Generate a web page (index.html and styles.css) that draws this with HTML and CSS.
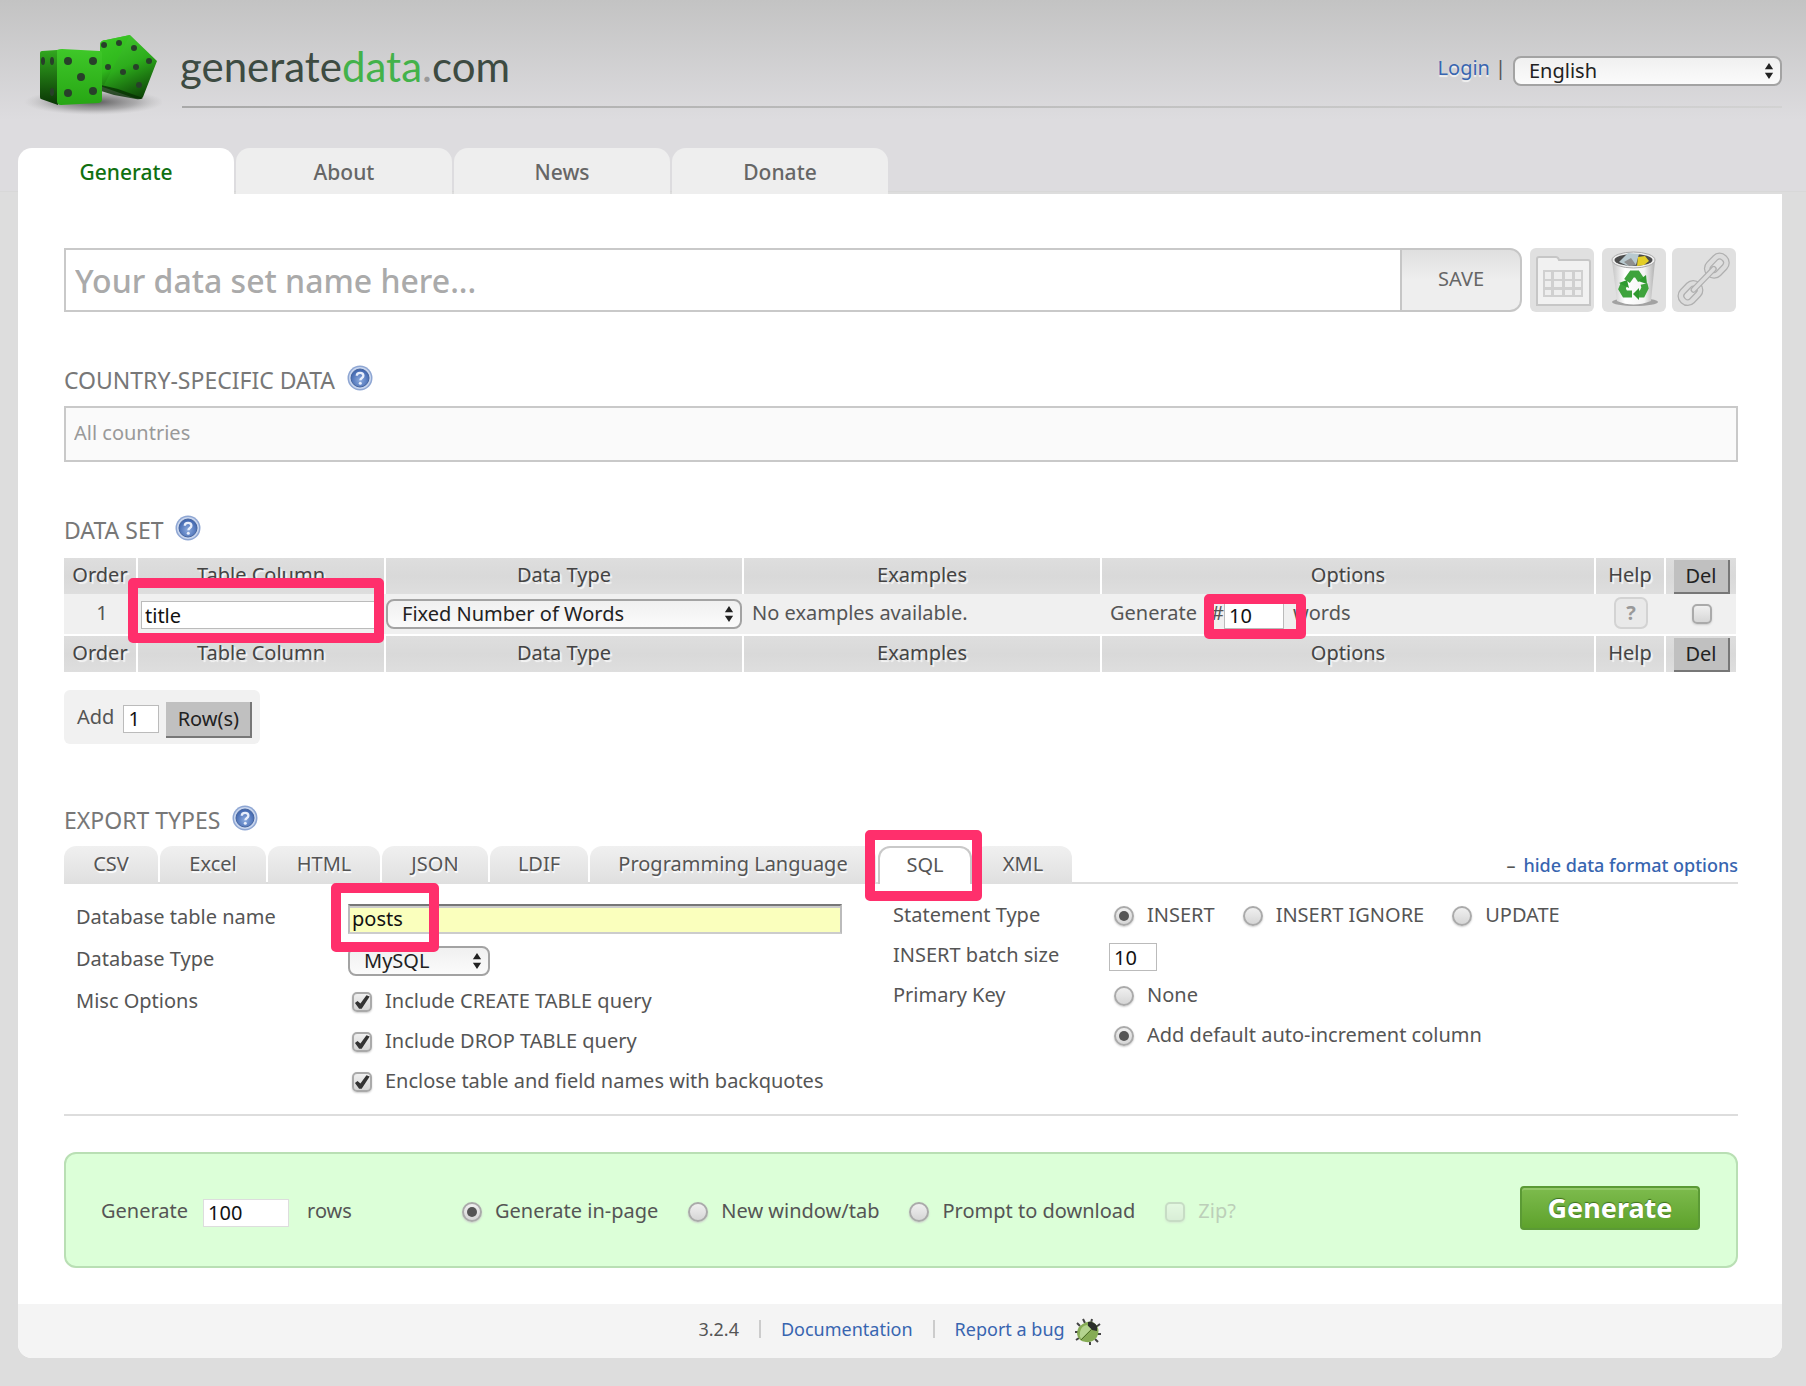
FILE: index.html
```html
<!DOCTYPE html>
<html lang="en">
<head>
<meta charset="utf-8">
<title>generatedata.com</title>
<link rel="stylesheet" href="styles.css">
</head>
<body>
<svg class="sprite" aria-hidden="true">
  <defs>
    <radialGradient id="help-fill" cx="50%" cy="62%" r="60%">
      <stop offset="0" stop-color="#8cabdf"/><stop offset="1" stop-color="#3c62ac"/>
    </radialGradient>
  </defs>
  <symbol id="arrows" viewBox="0 0 10 20"><path d="M5 1l4.600 7H.4zM5 19l4.600-7H.4z" fill="#222"/></symbol>
  <symbol id="help" viewBox="0 0 26 26">
    <circle cx="13" cy="13" r="12.500" fill="#8ea6d3"/>
    <circle cx="13" cy="13" r="11" fill="#c9d6ee"/>
    <circle cx="13" cy="13" r="9" fill="url(#help-fill)" stroke="#46659f" stroke-width="1"/>
    <path d="M9.800 10.800c0-4 6.600-4 6.600 0 0 2.300-3 2.200-3 4.500" fill="none" stroke="#e8eefb" stroke-width="2.300"/>
    <circle cx="13.300" cy="18.200" r="1.500" fill="#e8eefb"/>
  </symbol>
</svg>

<header class="header">
  <svg class="dice" width="140" height="100" viewBox="0 0 140 100" aria-hidden="true">
    <defs>
      <linearGradient id="d1" x1="0" y1="0" x2="0" y2="1"><stop offset="0" stop-color="#3fc829"/><stop offset="1" stop-color="#27a614"/></linearGradient>
      <linearGradient id="d2" x1="0" y1="0" x2="0" y2="1"><stop offset="0" stop-color="#32a91f"/><stop offset="1" stop-color="#0a3505"/></linearGradient>
      <linearGradient id="d3" x1=".2" y1="0" x2=".6" y2="1"><stop offset="0" stop-color="#43c92f"/><stop offset=".5" stop-color="#2dad1c"/><stop offset="1" stop-color="#0f4a08"/></linearGradient>
      <linearGradient id="d4" x1="0" y1="0" x2=".3" y2="1"><stop offset="0" stop-color="#3cc826"/><stop offset=".7" stop-color="#2fb81c"/><stop offset="1" stop-color="#1d7a10"/></linearGradient>
      <radialGradient id="sh"><stop offset="0" stop-color="#222" stop-opacity=".7"/><stop offset=".6" stop-color="#555" stop-opacity=".35"/><stop offset="1" stop-color="#999" stop-opacity="0"/></radialGradient>
    </defs>
    <ellipse cx="72" cy="72" rx="70" ry="13" fill="url(#sh)"/>
    <path d="M78 14q1-4 6-4l24-5 27 26-14 36-2 2-7-1-34-12z" fill="url(#d3)"/>
    <path d="M78 14q1-4 6-4l24-5-26 50-4-1z" fill="url(#d4)"/>
    <path d="M79 55l17 4 25 9q-3 2-7 1l-22-4-13-4z" fill="#082f04" opacity=".8"/>
    <path d="M18 23q0-2 2-2l15-1 1 55-17-6q-1 0-1-2z" fill="url(#d2)"/>
    <path d="M35 20q2-1 5-1l38 2q2 0 2 3v46q0 2-3 3l-38 2q-4 0-4-4z" fill="url(#d1)"/>
    <g fill="#28402a">
      <circle cx="46" cy="31" r="4"/><circle cx="71" cy="31" r="4"/><circle cx="59" cy="47" r="4"/><circle cx="46" cy="63" r="4"/><circle cx="71" cy="61" r="4"/>
      <ellipse cx="21" cy="31" rx="2" ry="4"/><ellipse cx="30" cy="31" rx="2" ry="4"/><ellipse cx="30" cy="62" rx="2" ry="4"/>
      <circle cx="82" cy="15" r="3"/><circle cx="97" cy="13" r="3"/><circle cx="86" cy="37" r="3"/>
      <circle cx="112" cy="18" r="3"/><circle cx="127" cy="31" r="3"/><circle cx="101" cy="42" r="3"/><circle cx="114" cy="37" r="3"/><circle cx="117" cy="55" r="3"/>
    </g>
  </svg>
  <div class="brand-row">
    <div class="brand">generate<span class="brand-data">data</span><span class="brand-dot">.</span>com</div>
    <div class="account">
      <a href="#">Login</a><span class="bar">|</span>
      <span class="select lang"><select aria-label="Language"><option>English</option></select><svg><use href="#arrows"/></svg></span>
    </div>
  </div>
</header>

<nav class="tabs">
  <a class="tab active" href="#">Generate</a>
  <a class="tab" href="#">About</a>
  <a class="tab" href="#">News</a>
  <a class="tab" href="#">Donate</a>
</nav>

<main class="panel">
  <form class="content">
    <div class="name-row">
      <input class="set-name" type="text" aria-label="Data set name" placeholder="Your data set name here...">
      <button class="save" type="button">SAVE</button>
      <div class="tools">
        <button class="tool" type="button" aria-label="Data sets">
          <svg width="64" height="64" viewBox="0 0 64 64"><path d="M7 57V11q0-2 2-2h17q2 0 3 3h29q2 0 2 2v43z" fill="#f1f1f1" stroke="#c6c6c6" stroke-width="2"/><path d="M13 22h40v27H13z" fill="#d0d0d0"/><path d="M15 24h6v7h-6zm9 0h8v7h-8zm11 0h7v7h-7zm10 0h6v7h-6zM15 33h6v6h-6zm9 0h8v6h-8zm11 0h7v6h-7zm10 0h6v6h-6zM15 42h6v5h-6zm9 0h8v5h-8zm11 0h7v5h-7zm10 0h6v5h-6z" fill="#eee"/></svg>
        </button>
        <button class="tool" type="button" aria-label="Empty">
          <svg width="64" height="64" viewBox="0 0 64 64"><defs><linearGradient id="bin"><stop offset="0" stop-color="#c4c4c4"/><stop offset=".3" stop-color="#fff"/><stop offset=".75" stop-color="#f4f4f4"/><stop offset="1" stop-color="#b0b0b0"/></linearGradient></defs><ellipse cx="33" cy="54" rx="23" ry="4" fill="#888" opacity=".7"/><path d="M10 13l5 40q16 7 34 0l4-40z" fill="url(#bin)"/><ellipse cx="31.500" cy="12" rx="21.500" ry="8" fill="#eee" stroke="#aaa"/><ellipse cx="31.500" cy="12" rx="19" ry="6" fill="#4b4b4b"/><path d="M17 14l9-9 11 1-3 11-8 1z" fill="#b8c9cf"/><path d="M22 14l7-4 5 7-7 1z" fill="#8f8f8f"/><path d="M36 9l7-1 4 5-5 4-7 1z" fill="#e3ce27"/><g fill="none" stroke="#3ea33c" stroke-width="7"><path d="M25 33l5-7h5l4 6"/><path d="M42 36l1 4-3 6h-5"/><path d="M30 46h-7l-3-5 2-5"/></g><g fill="#2f9a2f"><path d="M44 27l1 9-9-3z"/><path d="M37 40v12l-6-6z"/><path d="M17 35l8-3 2 8z"/></g></svg>
        </button>
      </div>
      <button class="tool" type="button" aria-label="Link">
        <svg width="64" height="64" viewBox="0 0 64 64"><g fill="none" transform="translate(0 -1) rotate(-46 32 32)"><g stroke="#b0b0b0" stroke-width="7"><rect x="2" y="25.500" width="21" height="13" rx="6"/><rect x="40" y="25.500" width="21" height="13" rx="6"/></g><g stroke="#dcdcdc" stroke-width="4.500"><rect x="2" y="25.500" width="21" height="13" rx="6"/><rect x="40" y="25.500" width="21" height="13" rx="6"/></g><path d="M17 32h29" stroke="#b0b0b0" stroke-width="6" stroke-linecap="round"/><path d="M17 32h29" stroke="#dcdcdc" stroke-width="3.500" stroke-linecap="round"/></g></svg>
      </button>
    </div>

    <h2 class="country-title">COUNTRY-SPECIFIC DATA <a href="#" aria-label="Help"><svg class="help"><use href="#help"/></svg></a></h2>
    <input class="countries" type="text" aria-label="Countries" placeholder="All countries">

    <h2 class="set-title">DATA SET <a href="#" aria-label="Help"><svg class="help"><use href="#help"/></svg></a></h2>
    <table class="grid">
      <colgroup><col class="c-order"><col class="c-name"><col class="c-type"><col class="c-type"><col><col class="c-help"><col class="c-del"></colgroup>
      <thead>
        <tr><th>Order</th><th>Table Column</th><th>Data Type</th><th>Examples</th><th>Options</th><th>Help</th><th><button class="grey del" type="button">Del</button></th></tr>
      </thead>
      <tbody>
        <tr>
          <td class="center">1</td>
          <td class="name-cell"><input class="field title-field" type="text" aria-label="Table Column" value="title"><span class="mark mark-title"></span></td>
          <td><span class="select"><select aria-label="Data Type"><option>Fixed Number of Words</option></select><svg><use href="#arrows"/></svg></span></td>
          <td class="text-cell">No examples available.</td>
          <td class="text-cell"><label class="words"><span>Generate</span> <span class="hash">#</span><input class="field num" type="text" value="10"><span>words</span></label><span class="mark mark-words"></span></td>
          <td class="center"><button class="row-help" type="button">?</button></td>
          <td class="center"><input type="checkbox" aria-label="Delete row"></td>
        </tr>
      </tbody>
      <tfoot>
        <tr><th>Order</th><th>Table Column</th><th>Data Type</th><th>Examples</th><th>Options</th><th>Help</th><th><button class="grey del" type="button">Del</button></th></tr>
      </tfoot>
    </table>

    <div class="add"><label for="add-rows">Add</label><input class="field" id="add-rows" type="text" value="1"><button class="grey" type="button">Row(s)</button></div>

    <h2 class="export-title">EXPORT TYPES <a href="#" aria-label="Help"><svg class="help"><use href="#help"/></svg></a></h2>
    <div class="export-tabs">
      <button class="etab csv" type="button">CSV</button>
      <button class="etab excel" type="button">Excel</button>
      <button class="etab html" type="button">HTML</button>
      <button class="etab excel" type="button">JSON</button>
      <button class="etab ldif" type="button">LDIF</button>
      <button class="etab prog" type="button">Programming Language</button>
      <div class="sql-wrap"><button class="etab sql" type="button">SQL</button><span class="mark mark-sql"></span></div>
      <button class="etab ldif" type="button">XML</button>
      <div class="hide"><span>–</span> <a href="#">hide data format options</a></div>
    </div>

    <div class="settings">
      <div class="left">
        <label for="tname">Database table name</label>
        <div class="table-name"><input id="tname" type="text" value="posts"><span class="mark mark-posts"></span></div>
        <label for="dbtype">Database Type</label>
        <span class="select db"><select id="dbtype"><option>MySQL</option></select><svg><use href="#arrows"/></svg></span>
        <span>Misc Options</span>
        <div class="stack">
          <label class="opt"><input type="checkbox" checked>Include CREATE TABLE query</label>
          <label class="opt"><input type="checkbox" checked>Include DROP TABLE query</label>
          <label class="opt"><input type="checkbox" checked>Enclose table and field names with backquotes</label>
        </div>
      </div>
      <div class="right">
        <span>Statement Type</span>
        <div class="choices">
          <label class="opt"><input type="radio" name="st" checked>INSERT</label>
          <label class="opt"><input type="radio" name="st">INSERT IGNORE</label>
          <label class="opt"><input type="radio" name="st">UPDATE</label>
        </div>
        <label for="batch">INSERT batch size</label>
        <div><input class="field batch" id="batch" type="text" value="10"></div>
        <span>Primary Key</span>
        <div class="stack">
          <label class="opt"><input type="radio" name="pk">None</label>
          <label class="opt"><input type="radio" name="pk" checked>Add default auto-increment column</label>
        </div>
      </div>
    </div>

    <div class="run">
      <label class="count">Generate<input class="field" type="text" value="100"><span>rows</span></label>
      <div class="targets">
        <label class="opt"><input type="radio" name="to" checked>Generate in-page</label>
        <label class="opt"><input type="radio" name="to">New window/tab</label>
        <label class="opt"><input type="radio" name="to">Prompt to download</label>
        <label class="opt zip"><input type="checkbox" disabled>Zip?</label>
      </div>
      <button class="go" type="button">Generate</button>
    </div>
  </form>
  <footer class="footer">
    <span>3.2.4</span><i></i><a href="#">Documentation</a><i></i><a href="#">Report a bug</a>
    <svg class="bug" width="28" height="28" viewBox="0 0 28 28" aria-hidden="true"><g stroke="#444" stroke-width="2" fill="none"><path d="M6 8L3 5M11 5L9 1M4 14H1M5 20l-3 2M16 24v3M21 21l3 3M23 16h4M22 9l4-3M17 5l1-4"/></g><path d="M13 4q6-2 10 4 3 5 0 11-4 6-11 5-8-1-9-8Q3 7 13 4z" fill="#86ac55"/><path d="M14 4q5-1 9 4v5l-5-1-4-4z" fill="#2b2f2b"/><path d="M6 14q1-6 7-7l4 4-10 10q-2-3-1-7z" fill="#b4d48f"/><path d="M18 11L7 22" stroke="#4f7029" stroke-width="1"/></svg>
  </footer>
</main>
</body>
</html>
```
FILE: styles.css
```css
* { box-sizing: border-box; }
body {
  margin: 0;
  padding: 0 24px 28px 18px;
  background: #ddd linear-gradient(#c3c3c3, #dddcdf 120px, #dddcdf 191px, #d3d3d3 191px, #ddd 192px) no-repeat;
  color: #555;
  font: 20px/30px "Noto Sans", "Open Sans", sans-serif;
}
a { color: #3865b0; text-decoration: none; }
input, select, button { font: inherit; margin: 0; }
.sprite { position: absolute; width: 0; height: 0; }

/* header */
.header { display: flex; height: 148px; padding-top: 30px; }
.dice { flex: none; margin-left: 4px; margin-right: 20px; }
.brand-row {
  display: flex; flex: 1; justify-content: space-between; align-items: center;
  height: 78px; border-bottom: 2px solid; border-image: linear-gradient(90deg, #a9a9a9, #d2d2d2) 1;
}
.brand { font: 42px/48px "Lato", sans-serif; color: #3d4b42; padding-bottom: 4px; margin-left: -2px; }
.brand-data { color: #43b24a; }
.brand-dot { color: #999; }
.account { display: flex; align-items: center; }
.account .select { margin-top: 5px; }
.account a { text-shadow: 0 2px 1px #f4f4f4; }
.bar { margin: 0 7px 0 5px; }

.select { position: relative; display: block; height: 30px; }
.select select {
  appearance: none; display: block; width: 100%; height: 30px; padding: 0 14px 0 14px;
  border: 2px solid #a3a3a3; border-radius: 8px;
  background: linear-gradient(#f0f0f0, #fbfbfb); color: #222; line-height: 26px;
}
.select svg { position: absolute; right: 8px; top: 6px; width: 10px; height: 18px; pointer-events: none; }
.lang { width: 269px; }

/* main tabs */
.tabs { display: flex; gap: 2px; }
.tab {
  width: 216px; height: 46px; border-radius: 14px 14px 0 0; background: #eee;
  color: #666; font-size: 21px; line-height: 48px; text-align: center; font-weight: 500;
}
.tab.active { background: #fff; color: #107010; }

.panel { background: #fff; border-radius: 0 0 14px 14px; overflow: hidden; }
.content { padding: 54px 44px 36px 46px; }

.name-row { display: flex; height: 64px; padding-right: 2px; }
.set-name {
  flex: 1; min-width: 0; border: 2px solid #c9c9c9; border-right: 0; padding: 0 9px;
  font-size: 32px; font-weight: 500; outline: 0;
}
.set-name::placeholder { color: #aaa; opacity: 1; }
.save {
  width: 122px; border: 2px solid #c6c6c6; border-radius: 0 12px 12px 0;
  background: linear-gradient(#dfdfdf, #eee 50%); color: #666; padding-bottom: 3px;
}
.tools { display: flex; gap: 8px; padding: 0 6px 0 8px; }
.tool { width: 64px; height: 64px; padding: 0; border: 0; border-radius: 6px; background: #e0e0e0; overflow: hidden; }
.tool svg { display: block; }

h2 { display: flex; align-items: center; gap: 12px; margin: 0; height: 30px; font-size: 23px; line-height: 30px; font-weight: 400; color: #777; }
h2 a { display: flex; padding-bottom: 4px; }
.help { width: 26px; height: 26px; }
.country-title { margin-top: 53px; margin-bottom: 11px; }
.countries {
  display: block; width: 100%; height: 56px; padding: 0 8px 4px; border: 2px solid #c9c9c9; background: #fafafa;
}
.countries::placeholder { color: #999; opacity: 1; }
.set-title { margin-top: 53px; margin-bottom: 13px; }

/* data table */
.grid { width: calc(100% - 2px); table-layout: fixed; border-collapse: separate; border-spacing: 0; }
.c-order { width: 72px; }
.c-name { width: 248px; }
.c-type { width: 358px; }
.c-help { width: 70px; }
.c-del { width: 72px; }
th {
  height: 36px; padding: 0 0 2px; background: linear-gradient(#dedede, #d9d9d9 50%, #dedede) padding-box;
  border-left: 2px solid #fff; font-weight: 400; line-height: 34px; color: #444; text-shadow: 2px 2px 1px #f6f6f6;
}
th:first-child { border-left: 0; }
th:last-child { padding: 2px 0 0 2px; }
td { position: relative; height: 42px; padding: 0; background: #f0f0f0; border-bottom: 2px solid #fff; }
td .select { margin: 0 0 1px 2px; }
.center { text-align: center; padding: 0 0 3px 4px; }
.text-cell { padding: 0 0 3px 10px; }
.field { height: 28px; border: 1px solid #bbb; background: #fff; color: #111; padding: 0 4px; line-height: 26px; }
.name-cell { padding: 2px 6px 0 5px; }
.title-field { display: block; width: 100%; padding: 0 3px; }
.words { display: flex; align-items: center; }
.hash { margin-left: 14px; }
.num { width: 60px; margin: 5px 9px 0 0; }
.row-help { width: 34px; height: 32px; padding: 0; border: 2px solid #d3d3d3; border-radius: 7px; background: #e9e9e9; color: #999; font-weight: 700; line-height: 24px; vertical-align: middle; }
.grey {
  border: 0; border-right: 2px solid #777; border-bottom: 2px solid #777; border-radius: 0;
  background: #c0c0c0; color: #222; padding: 0; text-align: center;
}
.del { display: block; width: 56px; height: 34px; margin: 0 auto; line-height: 32px; }
.add { display: flex; align-items: center; width: 196px; height: 54px; margin: 18px 0 61px; padding-left: 13px; border-radius: 6px; background: #f1f1f1; }
.add .field { width: 36px; margin: 3px 7px 0 9px; }
.add .grey { width: 86px; height: 36px; margin-top: 5px; }

/* pen marks over the fields */
.mark { position: absolute; border: 10px solid #ff2f6c; border-radius: 5px; pointer-events: none; z-index: 2; }
.mark-title { left: -8px; top: -16px; width: 256px; height: 65px; }
.mark-words { left: 104px; top: 0; width: 102px; height: 45px; }
.mark-sql { left: -13px; top: -16px; width: 117px; height: 71px; }
.mark-posts { left: -17px; top: -19px; width: 108px; height: 69px; }

/* export types */
.export-title { margin-bottom: 11px; }
.export-tabs { display: flex; gap: 2px; height: 38px; border-bottom: 2px solid #ddd; }
.etab {
  height: 38px; padding: 0 0 2px; border: 0; border-radius: 12px 12px 0 0;
  background: linear-gradient(#f0f0f0, #dfdfdf); color: #555; text-shadow: 1px 2px 1px #fff;
}
.csv { width: 94px; }
.excel { width: 106px; }
.html { width: 112px; }
.ldif { width: 98px; }
.prog { width: 286px; }
.sql-wrap { position: relative; }
.sql { width: 94px; border: 2px solid #c9c9c9; border-bottom: 0; background: #fff; }
.hide { display: flex; gap: 8px; margin-left: auto; font-size: 18px; line-height: 38px; font-weight: 500; }

.settings { display: flex; border-bottom: 2px solid #ddd; }
.left { flex: 1; display: grid; grid-template-columns: 272px 1fr; grid-template-rows: 42px 42px auto; padding: 18px 51px 18px 12px; }
.right { width: 845px; display: grid; grid-template-columns: 216px 1fr; grid-template-rows: 40px 40px auto; align-content: start; padding-top: 16px; }
.table-name { position: relative; }
.table-name input {
  display: block; width: 100%; height: 30px; margin-top: 2px; padding: 0 2px; border: 2px solid; border-color: #777 #bbb #ccc #bbb;
  background: #faffbd; color: #111; box-shadow: inset 0 2px #ccc;
}
.db { width: 142px; margin-top: 2px; }
.stack { display: flex; flex-direction: column; gap: 10px; }
.stack .opt { height: 30px; }
.left .stack { padding-left: 4px; }
.right .stack, .choices { padding-left: 5px; }
.choices { display: flex; gap: 28px; }
.opt { display: flex; gap: 13px; }
.batch { display: block; width: 48px; margin-top: 3px; }

input[type="checkbox"], input[type="radio"] {
  appearance: none; display: inline-grid; place-items: center; flex: none; width: 20px; height: 20px; margin: 6px 0 0;
  border: 2px solid #aaa; border-radius: 5px; background: linear-gradient(#f0f0f0, #d6d6d6); box-shadow: 0 1px 2px #ccc;
}
td input[type="checkbox"] { vertical-align: middle; margin: 0; }
input[type="radio"] { border-radius: 50%; }
input[type="radio"]:checked::after { content: ""; width: 10px; height: 10px; border-radius: 50%; background: #555; }
input[type="checkbox"]:checked::after {
  content: ""; width: 16px; height: 14px; background: #333;
  clip-path: polygon(6% 58%, 22% 42%, 40% 60%, 78% 2%, 98% 10%, 48% 98%, 32% 98%);
}

.run { display: flex; align-items: center; height: 116px; margin-top: 36px; padding: 2px 36px 0 35px; border: 2px solid #b9dfb4; border-radius: 12px; background: #dcffd8; }
.count { display: flex; width: 361px; }
.count .field { width: 86px; margin: 3px 18px 0 15px; border-color: #ddd; }
.targets { display: flex; flex: 1; gap: 30px; }
.zip { color: #bccfb9; }
.zip input { opacity: .4; }
.go {
  width: 180px; height: 44px; margin-bottom: 6px; padding: 0; border: 2px solid #5b9a35; border-radius: 4px;
  background: linear-gradient(#7dbb4d, #5ea22c); color: #fff; font-size: 27px; font-weight: 700; line-height: 38px;
  text-shadow: 0 -1px 1px #3d6e1d; box-shadow: inset 0 2px #92c768;
}
.footer { display: flex; align-items: center; justify-content: center; height: 54px; padding-bottom: 4px; background: #f4f4f4; font-size: 18px; }
.footer i { width: 2px; height: 18px; margin: 0 20px; background: #ccc; }
.bug { margin: 6px 0 0 9px; }
```
